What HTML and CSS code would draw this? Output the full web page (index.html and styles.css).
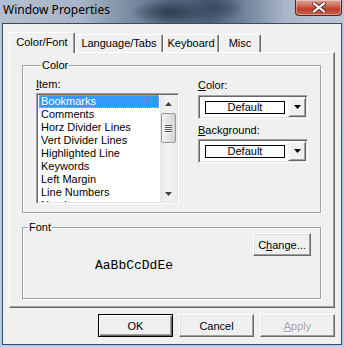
FILE: index.html
```html
<!doctype html>
<html>
    <head>
        <title>Window Properties</title>
        <link rel="stylesheet" href="styles.css">
    </head>
<body>
    <div class="window">
        <div class="titlebar">
            <span class="title">Window Properties</span>
            <span class="close">
                <svg width="14" height="11" viewBox="0 0 14 11">
                    <path d="M2 1.5 L12 9.5 M12 1.5 L2 9.5" stroke="#5a2a24" stroke-width="4" stroke-linecap="square"/>
                    <path d="M2 1.5 L12 9.5 M12 1.5 L2 9.5" stroke="#fff" stroke-width="2.2" stroke-linecap="square"/>
                </svg>
            </span>
        </div>

        <div class="client">
            <div class="tabs">
                <div class="tab active" style="width: 66px">Color/Font</div>
                <div class="tab" style="width: 88px">Language/Tabs</div>
                <div class="tab" style="width: 56px">Keyboard</div>
                <div class="tab" style="width: 42px">Misc</div>
            </div>

            <div class="panel">
                <fieldset class="group color-group">
                    <legend>Color</legend>
                    <div class="item-col">
                        <label class="lbl"><u>I</u>tem:</label>
                        <div class="listbox">
                            <ul class="items">
                                <li class="selected">Bookmarks</li>
                                <li>Comments</li>
                                <li>Horz Divider Lines</li>
                                <li>Vert Divider Lines</li>
                                <li>Highlighted Line</li>
                                <li>Keywords</li>
                                <li>Left Margin</li>
                                <li>Line Numbers</li>
                                <li>Numbers</li>
                            </ul>
                            <div class="scrollbar">
                                <div class="arrow">
                                    <svg width="7" height="4" viewBox="0 0 7 4"><path d="M0 4 L3.5 0 L7 4 Z" fill="#404040"/></svg>
                                </div>
                                <div class="thumb">
                                    <i></i><i></i><i></i><i></i>
                                </div>
                                <div class="track"></div>
                                <div class="arrow">
                                    <svg width="7" height="4" viewBox="0 0 7 4"><path d="M0 0 L7 0 L3.5 4 Z" fill="#404040"/></svg>
                                </div>
                            </div>
                        </div>
                    </div>

                    <div class="combo-col">
                        <label class="lbl first"><u>C</u>olor:</label>
                        <div class="combo">
                            <span class="swatch">Default</span>
                            <span class="drop">
                                <svg width="7" height="4" viewBox="0 0 7 4"><path d="M0 0 L7 0 L3.5 4 Z" fill="#000"/></svg>
                            </span>
                        </div>
                        <label class="lbl second"><u>B</u>ackground:</label>
                        <div class="combo">
                            <span class="swatch">Default</span>
                            <span class="drop">
                                <svg width="7" height="4" viewBox="0 0 7 4"><path d="M0 0 L7 0 L3.5 4 Z" fill="#000"/></svg>
                            </span>
                        </div>
                    </div>
                </fieldset>

                <fieldset class="group font-group">
                    <legend>Font</legend>
                    <button class="btn change">C<u>h</u>ange...</button>
                    <div class="sample">AaBbCcDdEe</div>
                </fieldset>
            </div>

            <div class="buttons">
                <button class="btn default">OK</button>
                <button class="btn">Cancel</button>
                <button class="btn disabled"><u>A</u>pply</button>
            </div>
        </div>
    </div>
</body>
</html>
```

FILE: styles.css
```css
* { margin: 0; padding: 0; box-sizing: border-box; }
body { font: 11px "Liberation Sans", Arial, sans-serif; color: #000; width: 344px; height: 347px; overflow: hidden; }
u { text-decoration: underline; text-underline-offset: 1px; }

.window {
    width: 344px;
    height: 347px;
    display: flex;
    flex-direction: column;
    background: linear-gradient(to bottom, #b4c3d4 0px, #b9cbe0 60px, #b4cde8 347px);
}

.titlebar {
    height: 23px;
    display: flex;
    justify-content: space-between;
    align-items: flex-start;
    padding-left: 3px;
    background:
        radial-gradient(ellipse 40px 12px at 170px 12px, #2f3c50 0%, rgba(47,60,80,0) 100%),
        radial-gradient(ellipse 30px 14px at 215px 8px, #3a4a61 0%, rgba(58,74,97,0) 100%),
        linear-gradient(90deg, #b3c0d0 0px, #a6b5c7 80px, #7b8ca2 130px, #55657c 170px, #4e5e75 210px, #7889a0 250px, #a9b7c8 285px, #bac7d6 344px);
}

.title {
    font: 12px "Noto Sans", "Open Sans", sans-serif;
    line-height: 20px;
    color: #000;
}

.close {
    width: 47px;
    height: 16px;
    margin-right: 2px;
    display: flex;
    align-items: center;
    justify-content: center;
    border: 1px solid #4d2a26;
    border-top: none;
    border-radius: 0 0 4px 4px;
    background: linear-gradient(to bottom, #e0a197 0px, #d27464 5px, #c0402c 9px, #c8604c 15px);
    box-shadow: inset 0 0 0 1px rgba(255,255,255,0.35);
}

.client {
    flex: 1;
    margin: 0 2px 2px 2px;
    border: 1px solid #3d4b5e;
    background: #f0f0f0;
    padding: 8px 6px 0 6px;
    display: flex;
    flex-direction: column;
}

/* tabs */
.tabs {
    display: flex;
    height: 20px;
    align-items: flex-end;
    position: relative;
    z-index: 1;
}

.tab {
    height: 18px;
    padding-top: 2px;
    text-align: center;
    line-height: 13px;
    white-space: nowrap;
    border-top: 1px solid #fff;
    border-left: 1px solid #fff;
    border-right: 1px solid #696969;
    border-radius: 2px 2px 0 0;
    box-shadow: inset -1px 0 #a0a0a0;
    background: #f0f0f0;
}

.tab.active {
    height: 21px;
    margin-bottom: -1px;
    padding-top: 3px;
}

/* panel */
.panel {
    height: 256px;
    border: 1px solid;
    border-color: #fff #696969 #696969 #fff;
    box-shadow: inset -1px -1px #a0a0a0;
    padding: 6px 13px 0 12px;
    display: flex;
    flex-direction: column;
    gap: 8px;
}

.group {
    border: 1px solid #a0a0a0;
    box-shadow: 1px 1px #fff, inset 1px 1px #fff;
    min-width: 0;
}

.group legend {
    margin-left: 5px;
    padding: 0 1px;
    line-height: 13px;
    background: #f0f0f0;
}

.color-group {
    height: 154px;
    padding: 6px 0 0 13px;
    display: flex;
    gap: 19px;
}

.lbl { display: block; line-height: 13px; }
.lbl.first { margin-top: 1px; }
.lbl.second { margin-top: 5px; }

.listbox {
    margin-top: 2px;
    width: 143px;
    height: 111px;
    display: flex;
    background: #fff;
    border: 1px solid;
    border-color: #a0a0a0 #fff #fff #a0a0a0;
    box-shadow: inset 1px 1px #696969, inset -1px -1px #e3e3e3;
    padding: 1px;
    overflow: hidden;
}

.items {
    list-style: none;
    flex: 1;
    padding: 0 1px;
    overflow: hidden;
}

.items li {
    height: 13px;
    line-height: 13px;
    padding-left: 2px;
    white-space: nowrap;
}

.items li.selected {
    background: #3399ff;
    color: #fff;
    outline: 1px dotted #f5a650;
    outline-offset: -1px;
}

.scrollbar {
    width: 17px;
    display: flex;
    flex-direction: column;
    background: linear-gradient(to right, #e6e6e6, #f3f3f3 50%, #ececec);
}

.arrow {
    height: 17px;
    display: flex;
    align-items: center;
    justify-content: center;
}

.thumb {
    margin: 1px 1px 0 1px;
    height: 30px;
    border: 1px solid #979797;
    border-radius: 2px;
    background: linear-gradient(to right, #f3f3f3, #e4e4e4 50%, #d4d4d4);
    display: flex;
    flex-direction: column;
    align-items: center;
    justify-content: center;
    gap: 1px;
}

.thumb i {
    display: block;
    width: 7px;
    height: 1px;
    background: #555;
    box-shadow: 0 1px #f6f6f6;
}

.track { flex: 1; }

.combo-col { display: flex; flex-direction: column; }

.combo {
    margin-top: 3px;
    width: 110px;
    height: 24px;
    display: flex;
    align-items: center;
    justify-content: space-between;
    background: #fff;
    border: 1px solid;
    border-color: #a0a0a0 #fff #fff #a0a0a0;
    box-shadow: inset 1px 1px #696969, inset -1px -1px #e3e3e3;
    padding: 1px 1px 1px 6px;
}

.lbl.second + .combo { margin-top: 2px; }

.swatch {
    width: 80px;
    height: 13px;
    line-height: 11px;
    border: 1px solid #000;
    background: #fff;
    text-align: center;
}

.drop {
    width: 18px;
    height: 20px;
    display: flex;
    align-items: center;
    justify-content: center;
    background: #f0f0f0;
    border: 1px solid;
    border-color: #f0f0f0 #696969 #696969 #f0f0f0;
    box-shadow: inset 1px 1px #fff, inset -1px -1px #a0a0a0;
}

.font-group {
    height: 78px;
    padding: 0 9px 0 0;
    display: flex;
    flex-direction: column;
}

.sample {
    margin: 2px 0 0 72px;
    font: 13px "Liberation Mono", "Courier New", monospace;
    line-height: 15px;
}

/* buttons */
.btn {
    width: 75px;
    height: 23px;
    font: inherit;
    color: #000;
    background: #f0f0f0;
    border: 1px solid;
    border-color: #fff #696969 #696969 #fff;
    box-shadow: inset -1px -1px #a0a0a0, inset 1px 1px #e3e3e3;
}

.btn.change {
    width: 58px;
    align-self: flex-end;
    margin-top: -1px;
}

.btn.default {
    border-color: #000;
    box-shadow: inset 1px 1px #fff, inset -1px -1px #696969, inset -2px -2px #a0a0a0;
}

.btn.disabled {
    color: #a0a0a0;
    text-shadow: 1px 1px #fff;
}

.buttons {
    margin-top: 6px;
    display: flex;
    justify-content: flex-end;
    gap: 6px;
}
```
